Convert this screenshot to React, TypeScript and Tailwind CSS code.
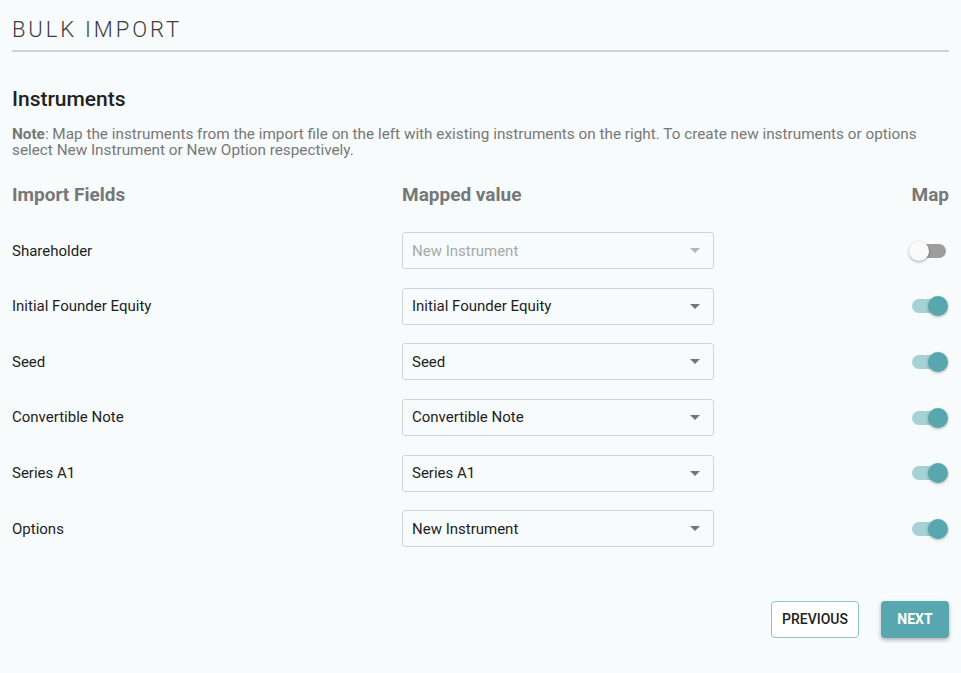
import { useState } from 'react'

const rows = [
  { label: 'Shareholder', value: 'New Instrument', on: false },
  { label: 'Initial Founder Equity', value: 'Initial Founder Equity', on: true },
  { label: 'Seed', value: 'Seed', on: true },
  { label: 'Convertible Note', value: 'Convertible Note', on: true },
  { label: 'Series A1', value: 'Series A1', on: true },
  { label: 'Options', value: 'New Instrument', on: true },
]

function Toggle({ on, onClick }: { on: boolean; onClick: () => void }) {
  return (
    <button onClick={onClick} className="relative w-[34px] h-5 cursor-pointer">
      <span
        className={
          on
            ? 'absolute left-0 right-0 top-[3px] h-[14px] rounded-full bg-[#a6d1d5]'
            : 'absolute left-0 right-0 top-[3px] h-[14px] rounded-full bg-[#9e9e9e]'
        }
      />
      <span
        className={
          on
            ? 'absolute top-0 left-[16px] w-5 h-5 rounded-full bg-[#58a6ae] shadow-[0_1px_3px_rgba(0,0,0,0.3)]'
            : 'absolute top-0 -left-[3px] w-5 h-5 rounded-full bg-[#fafafa] shadow-[0_1px_3px_rgba(0,0,0,0.35)]'
        }
      />
    </button>
  )
}

function Select({ value, disabled }: { value: string; disabled: boolean }) {
  return (
    <div className="flex items-center justify-between h-[37px] px-[9px] border border-[#cfd4d6] rounded-[3px] bg-transparent">
      <span className={disabled ? 'text-[15px] text-[#a8a8a8]' : 'text-[15px] text-[#1e1e1e]'}>{value}</span>
      <svg width="10" height="5" viewBox="0 0 10 5" className="mr-[4px]">
        <path d="M0 0 L10 0 L5 5 Z" fill={disabled ? '#b5b5b5' : '#757575'} />
      </svg>
    </div>
  )
}

export default function App() {
  const [state, setState] = useState(rows.map(r => r.on))

  return (
    <div className="min-h-[673px] bg-[#f7fbfc] px-3 font-['Roboto',sans-serif]">
      {/* Header */}
      <div className="pt-[17px] pb-[7px] border-b-2 border-[#cfd2d3]">
        <h1 className="text-[22px] leading-[26px] font-light tracking-[0.13em] text-[#3d3d3d]">BULK IMPORT</h1>
      </div>

      <h2 className="mt-[35px] text-[21px] leading-6 font-medium text-[#222]">Instruments</h2>

      <p className="mt-[15px] text-[15.3px] leading-[16px] text-[#777]">
        <span className="font-bold">Note</span>: Map the instruments from the import file on the left with existing instruments on the right. To create new instruments or options select New Instrument or New Option respectively.
      </p>

      {/* Table header */}
      <div className="grid grid-cols-[390px_312px_1fr] mt-[22px] h-[30px] items-center text-[19px] font-bold text-[#777]">
        <div>Import Fields</div>
        <div>Mapped value</div>
        <div className="text-right">Map</div>
      </div>

      <div className="mt-[13px]">
        {rows.map((r, i) => (
          <div key={r.label} className="grid grid-cols-[390px_312px_1fr] h-[55.6px] items-center">
            <div className="text-[15px] text-[#1e1e1e]">{r.label}</div>
            <Select value={r.value} disabled={!state[i]} />
            <div className="flex justify-end pr-[3px]">
              <Toggle on={state[i]} onClick={() => setState(s => s.map((v, j) => (j === i ? !v : v)))} />
            </div>
          </div>
        ))}
      </div>

      {/* Footer buttons */}
      <div className="flex justify-end gap-[22px] mt-[44px]">
        <button className="h-[37px] w-[88px] rounded-[4px] border border-[#8cc4ca] bg-white text-[14px] font-medium text-[#222]">
          PREVIOUS
        </button>
        <button className="h-[37px] w-[68px] rounded-[4px] bg-[#58a7ae] text-[14px] font-bold text-white shadow-[0_2px_4px_rgba(0,0,0,0.3)]">
          NEXT
        </button>
      </div>
    </div>
  )
}
